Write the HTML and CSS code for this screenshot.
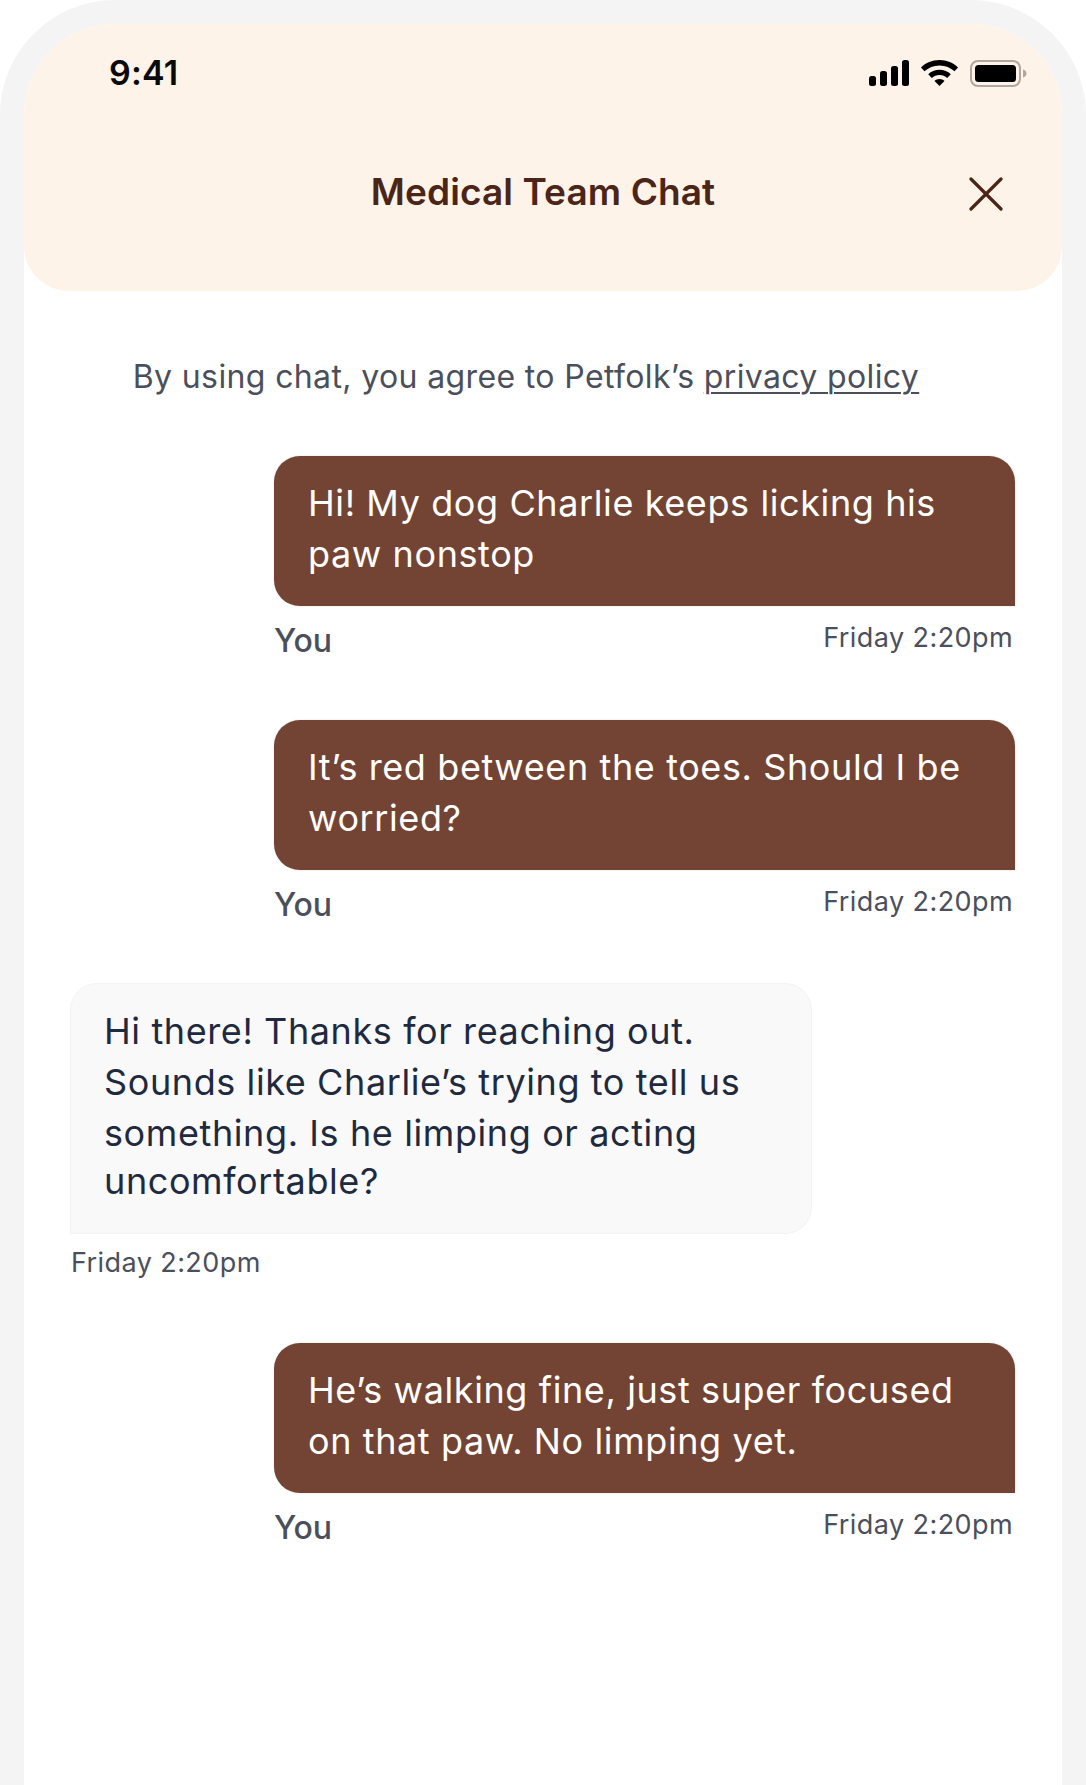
FILE: index.html
```html
<!DOCTYPE html>
<html lang="en">
<head>
<meta charset="utf-8">
<title>Medical Team Chat</title>
<link rel="stylesheet" href="styles.css">
</head>
<body>
<div class="frame">
  <main class="screen">
    <header class="header">
      <div class="status">
        <span class="clock">9:41</span>
        <div class="status-icons">
          <svg class="signal" width="40" height="26" viewBox="0 0 40 26"><rect x="0" y="16" width="7" height="10" rx="2.5"/><rect x="11" y="11" width="7" height="15" rx="2.5"/><rect x="22" y="6" width="7" height="20" rx="2.5"/><rect x="33" y="0" width="7" height="26" rx="2.5"/></svg>
          <svg class="wifi" width="37" height="26" viewBox="0 0 37 26"><path d="M18.5 0C26 0 32.2 2.9 37 7.4l-3.5 3.9C29.500 7.600 24.500 5.400 18.500 5.400S7.500 7.600 3.500 11.300L0 7.400C4.800 2.900 11 0 18.500 0Z"/><path d="M18.500 9.800c4.500 0 8.300 1.700 11.300 4.400l-3.600 3.900c-2.100-1.800-4.700-3-7.700-3s-5.600 1.200-7.700 3l-3.600-3.900c3-2.700 6.800-4.400 11.300-4.400Z"/><path d="M18.500 19c1.900 0 3.600.7 5 1.900L18.500 26l-5-5.100c1.400-1.200 3.100-1.900 5-1.900Z"/></svg>
          <svg class="battery" width="57" height="27" viewBox="0 0 57 27"><rect x="1" y="1" width="49" height="25" rx="7" fill="none" stroke="#b3a5a0" stroke-width="2"/><rect x="5" y="5" width="41" height="17" rx="3.500"/><path d="M53 9.500c2 .6 3.500 2 3.500 4s-1.500 3.400-3.500 4Z" fill="#b3a5a0"/></svg>
        </div>
      </div>
      <div class="title-row">
        <h1 class="title">Medical Team Chat</h1>
        <svg class="close" width="34" height="34" viewBox="0 0 34 34"><path d="M2 2l30 30M32 2L2 32"/></svg>
      </div>
    </header>
    <p class="notice">By using chat, you agree to Petfolk’s <a class="notice-link" href="#">privacy policy</a></p>
    <section class="thread">
      <article class="msg msg-out">
        <div class="bubble bubble-out">Hi! My dog Charlie keeps licking his paw nonstop</div>
        <div class="meta"><span class="who">You</span><span class="when">Friday 2:20pm</span></div>
      </article>
      <article class="msg msg-out">
        <div class="bubble bubble-out">It’s red between the toes. Should I be worried?</div>
        <div class="meta"><span class="who">You</span><span class="when">Friday 2:20pm</span></div>
      </article>
      <article class="msg msg-in">
        <div class="bubble bubble-in">Hi there! Thanks for reaching out. Sounds like Charlie’s trying to tell us something. Is he limping or acting <span class="tail-line">uncomfortable?</span></div>
        <div class="meta meta-in"><span class="when">Friday 2:20pm</span></div>
      </article>
      <article class="msg msg-out">
        <div class="bubble bubble-out">He’s walking fine, just super focused on that paw. No limping yet.</div>
        <div class="meta"><span class="who">You</span><span class="when">Friday 2:20pm</span></div>
      </article>
    </section>
  </main>
</div>
</body>
</html>
```
FILE: styles.css
```css
* { box-sizing: border-box; }
html, body { margin: 0; padding: 0; background: #fff; }
body { font-family: "Inter", "Open Sans", sans-serif; }
.frame {
  width: 1086px;
  height: 1785px;
  overflow: hidden;
  background: #f4f4f4;
  border-radius: 115px 115px 0 0;
  padding: 24px 24px 0;
}
.screen {
  height: 100%;
  background: #fff;
  border-radius: 90px 90px 0 0;
}
.header {
  height: 267px;
  background: #fdf3e8;
  border-radius: 90px 90px 45px 45px;
  padding: 33px 35px 0 85px;
}
.status {
  display: flex;
  justify-content: space-between;
  align-items: center;
  height: 32px;
}
.clock {
  font-size: 34px;
  font-weight: 600;
  line-height: 32px;
  letter-spacing: .2px;
  color: #0a0a0a;
}
.status-icons { display: flex; align-items: center; gap: 12px; }
.status-icons svg { display: block; fill: #000; }
.title-row {
  display: flex;
  justify-content: center;
  align-items: center;
  position: relative;
  margin-top: 81px;
  margin-left: -85px;
  margin-right: -35px;
  height: 44px;
}
.title {
  margin: 0;
  font-size: 37px;
  font-weight: 600;
  line-height: 44px;
  letter-spacing: .1px;
  color: #4a2518;
}
.close {
  position: absolute;
  right: 59px;
  top: 7px;
  fill: none;
  stroke: #4a2518;
  stroke-width: 3.200;
  stroke-linecap: round;
}
.notice {
  margin: 65px 0 0;
  padding-right: 34px;
  text-align: center;
  font-size: 32px;
  line-height: 42px;
  letter-spacing: .37px;
  color: #4b4f5c;
}
.notice-link { color: inherit; text-decoration: underline; text-underline-offset: 4px; text-decoration-thickness: 2px; }
.thread {
  display: flex;
  flex-direction: column;
  padding: 58px 47px 0;
}
.msg { width: 741px; margin-bottom: 60px; }
.msg-out { align-self: flex-end; }
.msg-in { align-self: flex-start; width: 740px; margin-bottom: 58px; }
.bubble {
  padding: 22px 34px 26px;
  font-size: 36px;
  line-height: 51px;
  letter-spacing: .6px;
}
.bubble-out {
  background: #734434;
  color: #fff;
  border-radius: 26px 26px 0 26px;
  box-shadow: 0 0 2px rgba(0, 0, 0, .15);
}
.bubble-in {
  background: #f9f9fa;
  color: #1f2a3f;
  border-radius: 26px 26px 26px 0;
  box-shadow: 0 0 0 1px #f3f3f3;
  padding-left: 33px;
}
.tail-line { display: block; margin-top: -3px; }
.meta {
  display: flex;
  justify-content: space-between;
  align-items: flex-start;
  margin-top: 14px;
  height: 40px;
  padding-right: 2px;
  color: #4b4f5c;
}
.meta-in { margin-top: 12px; }
.who { font-size: 32px; font-weight: 500; line-height: 41px; }
.when { font-size: 27px; line-height: 36px; letter-spacing: .42px; }
```
